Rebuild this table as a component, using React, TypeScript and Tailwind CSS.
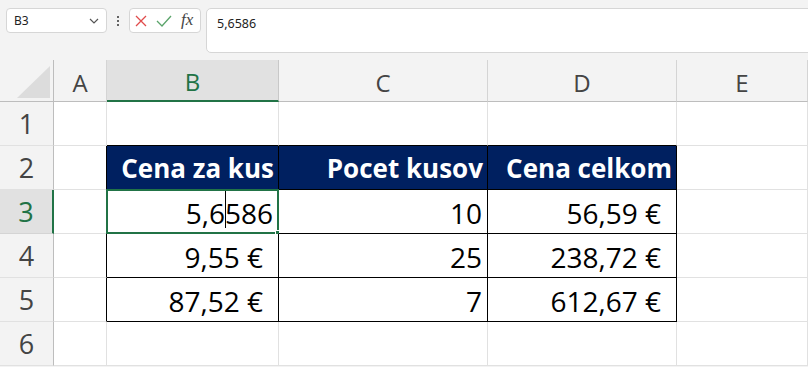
import React from "react";

const cols = ["A", "B", "C", "D", "E"];

type Cell = { text?: React.ReactNode; euro?: boolean };

const data: Record<number, Record<string, Cell>> = {
  2: { B: { text: "Cena za kus" }, C: { text: "Pocet kusov" }, D: { text: "Cena celkom" } },
  3: { B: { text: "cursor" }, C: { text: "10" }, D: { text: "56,59 €", euro: true } },
  4: { B: { text: "9,55 €", euro: true }, C: { text: "25" }, D: { text: "238,72 €", euro: true } },
  5: { B: { text: "87,52 €", euro: true }, C: { text: "7" }, D: { text: "612,67 €", euro: true } },
};

function CellView({ row, col }: { row: number; col: string }) {
  const inTable = row >= 2 && row <= 5 && ["B", "C", "D"].includes(col);
  const header = row === 2 && inTable;
  const cell = data[row]?.[col];
  let border = "border-r border-b border-[#e1e1e1]";
  if (inTable) border = "border-r border-b border-black";
  else if (col === "A" && row >= 2 && row <= 5) border = "border-r border-b border-r-black border-b-[#e1e1e1]";
  else if (row === 1 && ["B", "C", "D"].includes(col)) border = "border-r border-b border-r-[#e1e1e1] border-b-black";
  const bg = header ? "bg-[#002060] text-white font-bold text-[26px]" : "bg-white text-black text-[28px]";
  const pad = cell?.euro ? "pr-[15px]" : header ? "pr-[4px]" : "pr-[5px]";
  const selected = row === 3 && col === "B";
  return (
    <div className={`relative flex items-end justify-end ${pad} ${header ? "pb-[8px]" : "pb-[6px]"} leading-none whitespace-nowrap ${border} ${bg}`}>
      {cell?.text === "cursor" ? (
        <span>
          5,6
          <span className="relative">
            <span className="absolute left-0 -top-[5px] h-[39px] w-px bg-black" />
          </span>
          586
        </span>
      ) : (
        cell?.text
      )}
      {selected && (
        <div className="absolute -left-[1px] -top-[1px] -right-[1px] -bottom-[1px] border-2 border-[#217346] pointer-events-none">
          <div className="absolute -right-[4px] -bottom-[4px] h-[6px] w-[6px] bg-[#217346] border border-white" />
        </div>
      )}
    </div>
  );
}

export default function App() {
  return (
    <div className="w-[808px] h-[367px] overflow-hidden bg-[#f3f3f3] font-['Open_Sans',sans-serif]">
      {/* Formula bar */}
      <div className="h-[60px] flex items-start pt-[8px] pl-[6px]">
        <div className="w-[101px] h-[25px] bg-white rounded-[4px] border border-[#d6d6d6] flex items-center justify-between pl-[7px] pr-[7px] text-[12px] text-[#222] font-['Noto_Sans',sans-serif]">
          <span>B3</span>
          <svg width="10" height="6" viewBox="0 0 10 6" fill="none">
            <path d="M1 1 L5 5 L9 1" stroke="#555" strokeWidth="1.2" />
          </svg>
        </div>
        <div className="w-[22px] h-[25px] flex flex-col items-center justify-center gap-[2px]">
          <span className="w-[2px] h-[2px] bg-[#333] rounded-full" />
          <span className="w-[2px] h-[2px] bg-[#333] rounded-full" />
          <span className="w-[2px] h-[2px] bg-[#333] rounded-full" />
        </div>
        <div className="w-[72px] h-[25px] bg-white rounded-[4px] border border-[#d6d6d6] flex items-center pl-[5px] gap-[9px]">
          <svg width="12" height="12" viewBox="0 0 12 12" fill="none">
            <path d="M1 1 L11 11 M11 1 L1 11" stroke="#e04b4b" strokeWidth="1.3" />
          </svg>
          <svg width="16" height="12" viewBox="0 0 16 12" fill="none">
            <path d="M1 6 L6 11 L15 1" stroke="#5aa46a" strokeWidth="1.3" />
          </svg>
          <span className="font-['Liberation_Serif',serif] italic text-[17px] text-[#444] leading-none -mt-[3px]">fx</span>
        </div>
        <div className="ml-[5px] flex-1 -mr-[10px] h-[45px] bg-white rounded-[5px] border border-[#d6d6d6] pl-[10px] pt-[6px] text-[12.5px] text-[#222] font-['Noto_Sans',sans-serif]">
          5,6586
        </div>
      </div>
      {/* Grid */}
      <div className="grid grid-cols-[54px_53px_172px_209px_189px_1fr] grid-rows-[42px_repeat(6,44px)]">
        <div className="relative bg-[#f3f3f3] border-r border-b border-[#bdbdbd]">
          <svg className="absolute left-0 top-0" width="54" height="42" viewBox="0 0 54 42">
            <polygon points="17,38 50,38 50,6" fill="#dcdcdc" />
          </svg>
        </div>
        {cols.map((c) => (
          <div
            key={c}
            className={`flex items-center justify-center pt-[4px] text-[24px] leading-none border-r ${
              c === "B"
                ? "bg-[#e1e1e1] text-[#217346] border-b-2 border-b-[#217346] border-r-[#c8c8c8]"
                : "bg-[#f3f3f3] text-[#444] border-b border-b-[#bdbdbd] border-r-[#d4d4d4]"
            }`}
          >
            {c}
          </div>
        ))}
        {[1, 2, 3, 4, 5, 6].map((r) => (
          <React.Fragment key={r}>
            <div
              className={`flex items-center justify-center text-[27px] leading-none border-b ${
                r === 3
                  ? "bg-[#e1e1e1] text-[#217346] border-r-2 border-r-[#217346] border-b-[#d4d4d4]"
                  : "bg-[#f3f3f3] text-[#444] border-r border-r-[#bdbdbd] border-b-[#e1e1e1]"
              }`}
            >
              {r}
            </div>
            {cols.map((c) => (
              <CellView key={c} row={r} col={c} />
            ))}
          </React.Fragment>
        ))}
      </div>
    </div>
  );
}
